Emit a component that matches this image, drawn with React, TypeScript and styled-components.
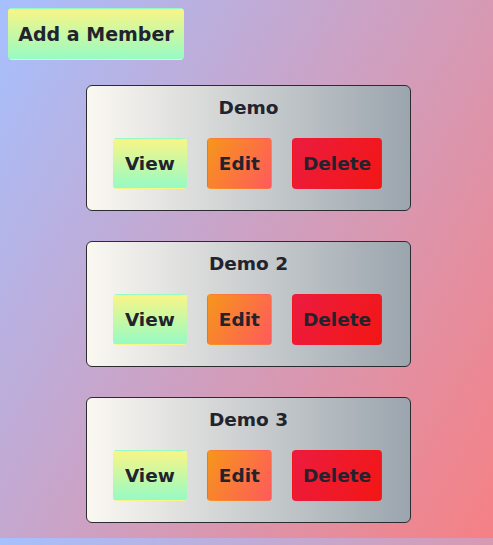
import React from "react";
import styled, { createGlobalStyle } from "styled-components";

const GlobalStyle = createGlobalStyle`
  body {
    margin: 8px;
    background: linear-gradient(120deg, #a6c0fe 0%, #f68084 100%);
    font-family: "DejaVu Sans", "Liberation Sans", sans-serif;
    color: #23232e;
  }
`;

const Page = styled.div`
  display: flex;
  flex-direction: column;
  align-items: flex-start;
`;

const AddButton = styled.button`
  font-family: inherit;
  font-weight: 700;
  font-size: 19px;
  color: #23232e;
  width: 176px;
  height: 52px;
  padding: 0;
  border: 1px solid transparent;
  border-radius: 4px;
  background: linear-gradient(to top, #96fbc4 0%, #f9f586 100%);
  cursor: pointer;
`;

const List = styled.div`
  display: flex;
  flex-direction: column;
  gap: 30px;
  padding: 25px 0 7px 78px;
`;

const Card = styled.div`
  box-sizing: border-box;
  width: 325px;
  height: 126px;
  border: 1px solid #2b2b30;
  border-radius: 6px;
  background: linear-gradient(to right, #fbf8f2 0%, #9ba5ae 100%);
  display: flex;
  flex-direction: column;
  align-items: center;
  padding-top: 10px;
`;

const Title = styled.div`
  font-weight: 700;
  font-size: 18.5px;
  line-height: 24px;
`;

const Actions = styled.div`
  display: flex;
  gap: 20px;
  margin-top: 18px;
  margin-left: -2px;
`;

const variants: Record<string, string> = {
  view: "linear-gradient(to top, #96fbc4 0%, #f9f586 100%)",
  edit: "linear-gradient(120deg, #f6961a 0%, #ff5a5c 100%)",
  delete: "linear-gradient(120deg, #ec1c40 0%, #f21614 100%)",
};

const ActionButton = styled.button<{ $variant: string }>`
  font-family: inherit;
  font-weight: 700;
  font-size: 18.5px;
  color: #23232e;
  height: 51px;
  padding: 0 ${(p) => (p.$variant === "delete" ? 10 : 11)}px;
  border: 1px solid transparent;
  border-radius: 4px;
  background: ${(p) => variants[p.$variant]};
  cursor: pointer;
`;

const members = ["Demo", "Demo 2", "Demo 3"];

export default function App() {
  return (
    <>
      <GlobalStyle />
      <Page>
        <AddButton>Add a Member</AddButton>
        <List>
          {members.map((m) => (
            <Card key={m}>
              <Title>{m}</Title>
              <Actions>
                <ActionButton $variant="view">View</ActionButton>
                <ActionButton $variant="edit">Edit</ActionButton>
                <ActionButton $variant="delete">Delete</ActionButton>
              </Actions>
            </Card>
          ))}
        </List>
      </Page>
    </>
  );
}
